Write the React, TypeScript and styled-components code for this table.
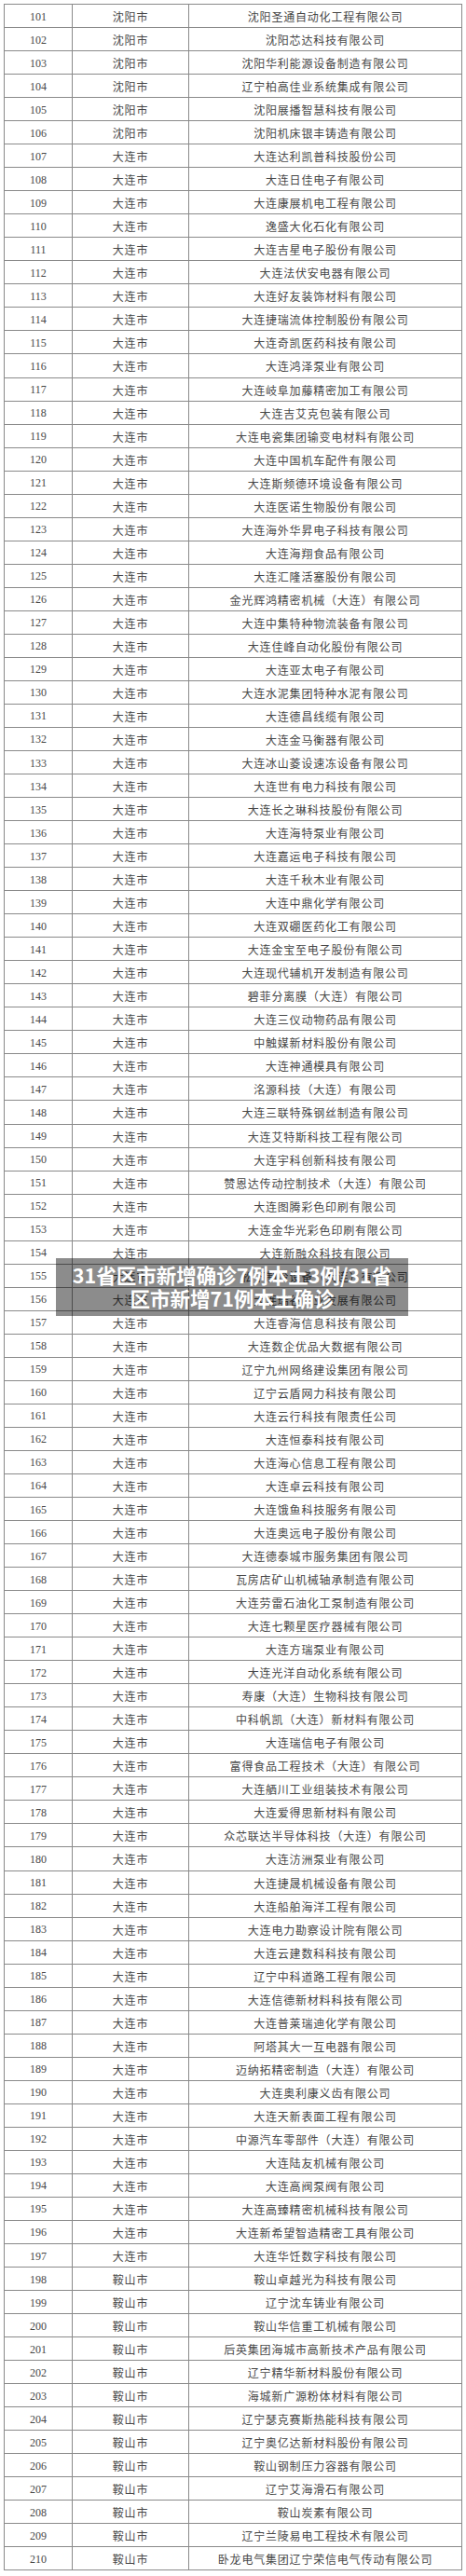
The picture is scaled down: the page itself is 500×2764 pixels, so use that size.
import styled, { createGlobalStyle } from "styled-components";

const GlobalStyle = createGlobalStyle`
  html, body {
    margin: 0;
    padding: 0;
    background: #ffffff;
  }
`;

const Page = styled.div`
  position: relative;
  width: 500px;
  min-height: 2764px;
  padding-top: 4px;
  box-sizing: border-box;
  background: #fff;
`;

const Table = styled.div`
  width: 492px;
  margin: 0 4px;
  box-sizing: border-box;
  border: 1px solid #8a8a8a;
  border-bottom: none;
`;

const Row = styled.div`
  display: grid;
  grid-template-columns: 73px 125px 1fr;
  height: 25.045px;
  box-sizing: border-box;
  border-bottom: 1px solid #8a8a8a;
`;

const Cell = styled.div<{ $num?: boolean; $last?: boolean }>`
  display: flex;
  align-items: center;
  justify-content: center;
  padding-top: 2px;
  box-sizing: border-box;
  border-right: ${(p) => (p.$last ? "none" : "1px solid #8a8a8a")};
  font-family: "Liberation Serif", "Noto Sans CJK SC", serif;
  font-size: 12px;
  letter-spacing: ${(p) => (p.$num ? "0" : "0.8px")};
  color: #484848;
  white-space: nowrap;
  overflow: hidden;
`;

const Banner = styled.div`
  position: absolute;
  left: 60px;
  top: 1350px;
  width: 378px;
  height: 62px;
  padding-top: 5px;
  box-sizing: border-box;
  background: rgba(0, 0, 0, 0.45);
  color: #fff;
  font-family: "Noto Sans CJK SC", "Noto Sans", sans-serif;
  font-weight: 700;
  font-size: 21.5px;
  line-height: 25px;
  text-align: center;
`;

const groups: { city: string; names: string[] }[] = [
  {
    city: "沈阳市",
    names: [
      "沈阳圣通自动化工程有限公司",
      "沈阳芯达科技有限公司",
      "沈阳华利能源设备制造有限公司",
      "辽宁柏高佳业系统集成有限公司",
      "沈阳展播智慧科技有限公司",
      "沈阳机床银丰铸造有限公司",
    ],
  },
  {
    city: "大连市",
    names: [
      "大连达利凯普科技股份公司",
      "大连日佳电子有限公司",
      "大连康展机电工程有限公司",
      "逸盛大化石化有限公司",
      "大连吉星电子股份有限公司",
      "大连法伏安电器有限公司",
      "大连好友装饰材料有限公司",
      "大连捷瑞流体控制股份有限公司",
      "大连奇凯医药科技有限公司",
      "大连鸿泽泵业有限公司",
      "大连岐阜加藤精密加工有限公司",
      "大连吉艾克包装有限公司",
      "大连电瓷集团输变电材料有限公司",
      "大连中国机车配件有限公司",
      "大连斯频德环境设备有限公司",
      "大连医诺生物股份有限公司",
      "大连海外华昇电子科技有限公司",
      "大连海翔食品有限公司",
      "大连汇隆活塞股份有限公司",
      "金光辉鸿精密机械（大连）有限公司",
      "大连中集特种物流装备有限公司",
      "大连佳峰自动化股份有限公司",
      "大连亚太电子有限公司",
      "大连水泥集团特种水泥有限公司",
      "大连德昌线缆有限公司",
      "大连金马衡器有限公司",
      "大连冰山菱设速冻设备有限公司",
      "大连世有电力科技有限公司",
      "大连长之琳科技股份有限公司",
      "大连海特泵业有限公司",
      "大连嘉运电子科技有限公司",
      "大连千秋木业有限公司",
      "大连中鼎化学有限公司",
      "大连双硼医药化工有限公司",
      "大连金宝至电子股份有限公司",
      "大连现代辅机开发制造有限公司",
      "碧菲分离膜（大连）有限公司",
      "大连三仪动物药品有限公司",
      "中触媒新材料股份有限公司",
      "大连神通模具有限公司",
      "洺源科技（大连）有限公司",
      "大连三联特殊钢丝制造有限公司",
      "大连艾特斯科技工程有限公司",
      "大连宇科创新科技有限公司",
      "赞恩达传动控制技术（大连）有限公司",
      "大连图腾彩色印刷有限公司",
      "大连金华光彩色印刷有限公司",
      "大连新融众科技有限公司",
      "松下制冷设备（大连）有限公司",
      "大连瑞谷产业发展有限公司",
      "大连睿海信息科技有限公司",
      "大连数企优品大数据有限公司",
      "辽宁九州网络建设集团有限公司",
      "辽宁云盾网力科技有限公司",
      "大连云行科技有限责任公司",
      "大连恒泰科技有限公司",
      "大连海心信息工程有限公司",
      "大连卓云科技有限公司",
      "大连饿鱼科技服务有限公司",
      "大连奥远电子股份有限公司",
      "大连德泰城市服务集团有限公司",
      "瓦房店矿山机械轴承制造有限公司",
      "大连劳雷石油化工泵制造有限公司",
      "大连七颗星医疗器械有限公司",
      "大连方瑞泵业有限公司",
      "大连光洋自动化系统有限公司",
      "寿康（大连）生物科技有限公司",
      "中科帆凯（大连）新材料有限公司",
      "大连瑞信电子有限公司",
      "富得食品工程技术（大连）有限公司",
      "大连舾川工业组装技术有限公司",
      "大连爱得思新材料有限公司",
      "众芯联达半导体科技（大连）有限公司",
      "大连汸洲泵业有限公司",
      "大连捷晟机械设备有限公司",
      "大连船舶海洋工程有限公司",
      "大连电力勘察设计院有限公司",
      "大连云建数科科技有限公司",
      "辽宁中科道路工程有限公司",
      "大连信德新材料科技有限公司",
      "大连普莱瑞迪化学有限公司",
      "阿塔其大一互电器有限公司",
      "迈纳拓精密制造（大连）有限公司",
      "大连奥利康义齿有限公司",
      "大连天新表面工程有限公司",
      "中源汽车零部件（大连）有限公司",
      "大连陆友机械有限公司",
      "大连高阀泵阀有限公司",
      "大连高臻精密机械科技有限公司",
      "大连新希望智造精密工具有限公司",
      "大连华饪数字科技有限公司",
    ],
  },
  {
    city: "鞍山市",
    names: [
      "鞍山卓越光为科技有限公司",
      "辽宁沈车铸业有限公司",
      "鞍山华信重工机械有限公司",
      "后英集团海城市高新技术产品有限公司",
      "辽宁精华新材料股份有限公司",
      "海城新广源粉体材料有限公司",
      "辽宁瑟克赛斯热能科技有限公司",
      "辽宁奥亿达新材料股份有限公司",
      "鞍山钢制压力容器有限公司",
      "辽宁艾海滑石有限公司",
      "鞍山炭素有限公司",
      "辽宁兰陵易电工程技术有限公司",
      "卧龙电气集团辽宁荣信电气传动有限公司",
    ],
  },
];

const rows = groups.flatMap((g) => g.names.map((name) => ({ city: g.city, name })));

export default function App() {
  return (
    <Page>
      <GlobalStyle />
      <Table>
        {rows.map((r, i) => (
          <Row key={i}>
            <Cell $num>{101 + i}</Cell>
            <Cell>{r.city}</Cell>
            <Cell $last>{r.name}</Cell>
          </Row>
        ))}
      </Table>
      <Banner>
        31省区市新增确诊7例本土3例/31省
        <br />
        区市新增71例本土确诊
      </Banner>
    </Page>
  );
}
